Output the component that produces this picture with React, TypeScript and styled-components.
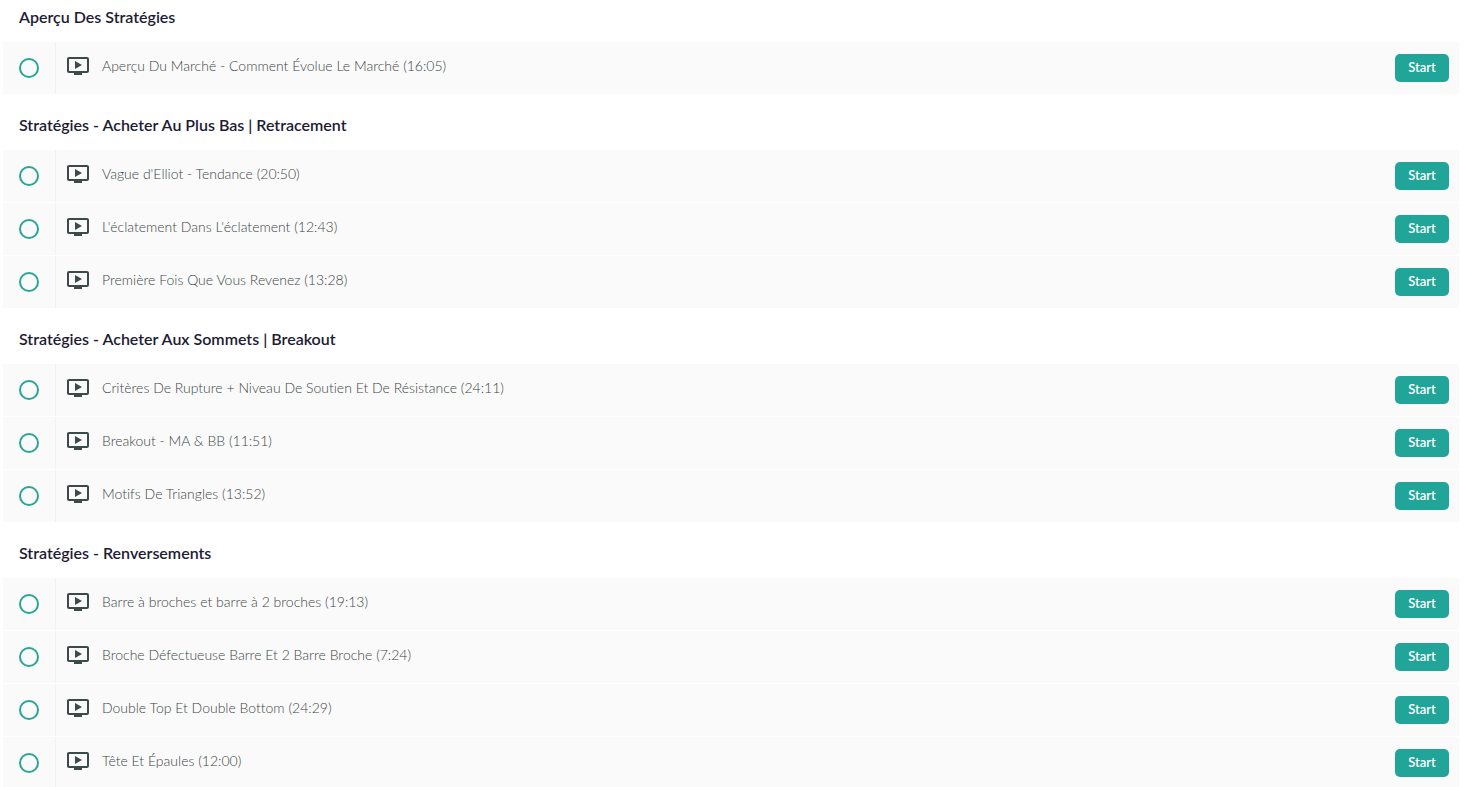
import React from "react";
import styled, { createGlobalStyle } from "styled-components";

const GlobalStyle = createGlobalStyle`
  *, *::before, *::after { box-sizing: border-box; }
  body {
    margin: 0;
    background: #ffffff;
    font-family: Lato, "Liberation Sans", sans-serif;
    font-variant-ligatures: none;
  }
`;

const Curriculum = styled.main`
  padding: 0 6px 0 3px;
`;

const Section = styled.section`
  padding-top: 21px;

  &:first-child {
    padding-top: 7px;
  }
`;

const SectionTitle = styled.h2`
  margin: 0 16px 15px;
  font-size: 16px;
  line-height: 20px;
  font-weight: 600;
  color: #1c1c33;
`;

const LectureList = styled.ul`
  display: flex;
  flex-direction: column;
  gap: 1px;
  margin: 0;
  padding: 0;
  list-style: none;
`;

const LectureRow = styled.li`
  display: flex;
  align-items: stretch;
  height: 52px;
  background: #fafafa;
`;

const StatusCell = styled.div`
  display: flex;
  align-items: center;
  width: 53px;
  padding-left: 16px;
  border-right: 1px solid #f1f1f1;
`;

const StatusRing = styled.span`
  width: 20px;
  height: 20px;
  border: 2px solid #2aa594;
  border-radius: 50%;
`;

const LectureLink = styled.a`
  display: flex;
  flex: 1;
  align-items: center;
  gap: 12px;
  padding: 0 10px 4px;
  color: #3c4646;
  font-size: 14px;
  line-height: 20px;
  font-weight: 300;
  text-decoration: none;
`;

const VideoIcon = styled.svg`
  flex: none;
  width: 24px;
  height: 24px;
  fill: #3c4a4a;
`;

const ActionCell = styled.div`
  display: flex;
  align-items: center;
  padding-right: 10px;
`;

const StartButton = styled.button`
  width: 54px;
  height: 28px;
  padding: 0 0 2px;
  border: 0;
  border-radius: 5px;
  background: #20a598;
  color: #ffffff;
  font-family: inherit;
  font-size: 13px;
  line-height: 20px;
  font-weight: 600;
  cursor: pointer;
`;

const sections = [
  {
    title: "Aperçu Des Stratégies",
    lectures: ["Aperçu Du Marché - Comment Évolue Le Marché (16:05)"],
  },
  {
    title: "Stratégies - Acheter Au Plus Bas | Retracement",
    lectures: [
      "Vague d'Elliot - Tendance (20:50)",
      "L'éclatement Dans L'éclatement (12:43)",
      "Première Fois Que Vous Revenez (13:28)",
    ],
  },
  {
    title: "Stratégies - Acheter Aux Sommets | Breakout",
    lectures: [
      "Critères De Rupture + Niveau De Soutien Et De Résistance (24:11)",
      "Breakout - MA & BB (11:51)",
      "Motifs De Triangles (13:52)",
    ],
  },
  {
    title: "Stratégies - Renversements",
    lectures: [
      "Barre à broches et barre à 2 broches (19:13)",
      "Broche Défectueuse Barre Et 2 Barre Broche (7:24)",
      "Double Top Et Double Bottom (24:29)",
      "Tête Et Épaules (12:00)",
    ],
  },
];

function Lecture({ name }: { name: string }) {
  return (
    <LectureRow>
      <StatusCell>
        <StatusRing />
      </StatusCell>
      <LectureLink href="#">
        <VideoIcon viewBox="0 0 24 24" aria-hidden="true">
          <path d="M21 3H3c-1.11 0-2 .89-2 2v12c0 1.1.89 2 2 2h5v2h8v-2h5c1.1 0 1.99-.9 1.99-2L23 5c0-1.11-.9-2-2-2zm0 14H3V5h18v12zm-5-6l-7 4V7z" />
        </VideoIcon>
        <span>{name}</span>
      </LectureLink>
      <ActionCell>
        <StartButton type="button">Start</StartButton>
      </ActionCell>
    </LectureRow>
  );
}

export default function App() {
  return (
    <>
      <GlobalStyle />
      <Curriculum>
        {sections.map((section) => (
          <Section key={section.title}>
            <SectionTitle>{section.title}</SectionTitle>
            <LectureList>
              {section.lectures.map((name) => (
                <Lecture key={name} name={name} />
              ))}
            </LectureList>
          </Section>
        ))}
      </Curriculum>
    </>
  );
}
